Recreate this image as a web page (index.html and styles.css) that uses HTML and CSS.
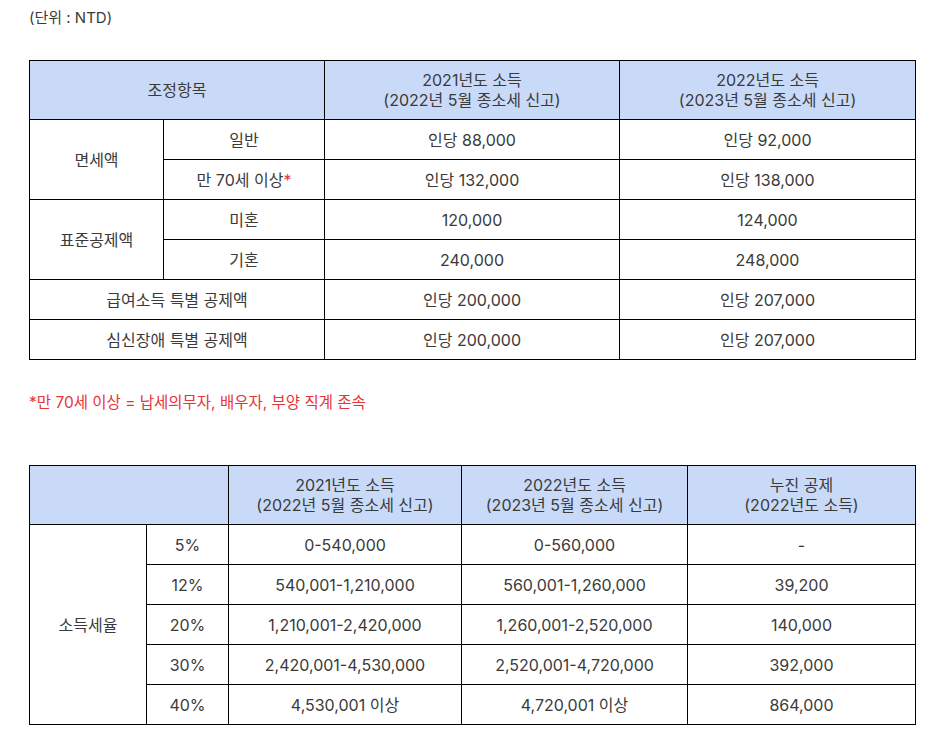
FILE: index.html
```html
<!DOCTYPE html>
<html lang="ko">
<head>
<meta charset="utf-8">
<link rel="stylesheet" href="styles.css">
</head>
<body>
<div class="page">
  <p class="unit">(단위 : NTD)</p>

  <table class="tbl tbl1">
    <colgroup>
      <col class="c1a"><col class="c1b"><col class="c1c"><col class="c1d">
    </colgroup>
    <thead>
      <tr class="head">
        <th colspan="2">조정항목</th>
        <th>2021년도 소득<br>(2022년 5월 종소세 신고)</th>
        <th>2022년도 소득<br>(2023년 5월 종소세 신고)</th>
      </tr>
    </thead>
    <tbody>
      <tr>
        <td rowspan="2">면세액</td>
        <td>일반</td>
        <td>인당 88,000</td>
        <td>인당 92,000</td>
      </tr>
      <tr>
        <td>만 70세 이상<span class="red">*</span></td>
        <td>인당 132,000</td>
        <td>인당 138,000</td>
      </tr>
      <tr>
        <td rowspan="2">표준공제액</td>
        <td>미혼</td>
        <td>120,000</td>
        <td>124,000</td>
      </tr>
      <tr>
        <td>기혼</td>
        <td>240,000</td>
        <td>248,000</td>
      </tr>
      <tr>
        <td colspan="2">급여소득 특별 공제액</td>
        <td>인당 200,000</td>
        <td>인당 207,000</td>
      </tr>
      <tr>
        <td colspan="2">심신장애 특별 공제액</td>
        <td>인당 200,000</td>
        <td>인당 207,000</td>
      </tr>
    </tbody>
  </table>

  <p class="note">*만 70세 이상 = 납세의무자, 배우자, 부양 직계 존속</p>

  <table class="tbl tbl2">
    <colgroup>
      <col class="c2a"><col class="c2b"><col class="c2c"><col class="c2d"><col class="c2e">
    </colgroup>
    <thead>
      <tr class="head">
        <th colspan="2"></th>
        <th>2021년도 소득<br>(2022년 5월 종소세 신고)</th>
        <th>2022년도 소득<br>(2023년 5월 종소세 신고)</th>
        <th>누진 공제<br>(2022년도 소득)</th>
      </tr>
    </thead>
    <tbody>
      <tr>
        <td rowspan="5">소득세율</td>
        <td>5%</td>
        <td>0-540,000</td>
        <td>0-560,000</td>
        <td>-</td>
      </tr>
      <tr>
        <td>12%</td>
        <td>540,001-1,210,000</td>
        <td>560,001-1,260,000</td>
        <td>39,200</td>
      </tr>
      <tr>
        <td>20%</td>
        <td>1,210,001-2,420,000</td>
        <td>1,260,001-2,520,000</td>
        <td>140,000</td>
      </tr>
      <tr>
        <td>30%</td>
        <td>2,420,001-4,530,000</td>
        <td>2,520,001-4,720,000</td>
        <td>392,000</td>
      </tr>
      <tr>
        <td>40%</td>
        <td>4,530,001 이상</td>
        <td>4,720,001 이상</td>
        <td>864,000</td>
      </tr>
    </tbody>
  </table>
</div>
</body>
</html>
```

FILE: styles.css
```css
html, body {
  margin: 0;
  padding: 0;
  background: #ffffff;
}

.page {
  padding: 0 29px;
  font-family: Inter, "Noto Sans CJK KR", sans-serif;
  font-size: 16px;
  color: #3a3a3a;
}

.unit {
  margin: 0;
  padding-top: 8px;
  height: 52px;
  line-height: 20px;
  font-size: 15px;
}

.tbl {
  border-collapse: collapse;
  table-layout: fixed;
  width: 886px;
}

.tbl th,
.tbl td {
  border: 1px solid #000000;
  text-align: center;
  vertical-align: middle;
  padding: 0;
  font-weight: normal;
  line-height: 20px;
}

.tbl .head th {
  background: #c9daf8;
}

.tbl .head {
  height: 59px;
}

.tbl tbody tr {
  height: 40px;
}

.c1a { width: 134px; }
.c1b { width: 161px; }
.c1c { width: 295px; }
.c1d { width: 296px; }

.c2a { width: 117px; }
.c2b { width: 82px; }
.c2c { width: 233px; }
.c2d { width: 226px; }
.c2e { width: 228px; }

.red {
  color: #e8333a;
}

.note {
  margin: 0;
  height: 105px;
  padding-top: 33px;
  box-sizing: border-box;
  line-height: 20px;
  font-size: 15.5px;
  color: #e8333a;
}
```
